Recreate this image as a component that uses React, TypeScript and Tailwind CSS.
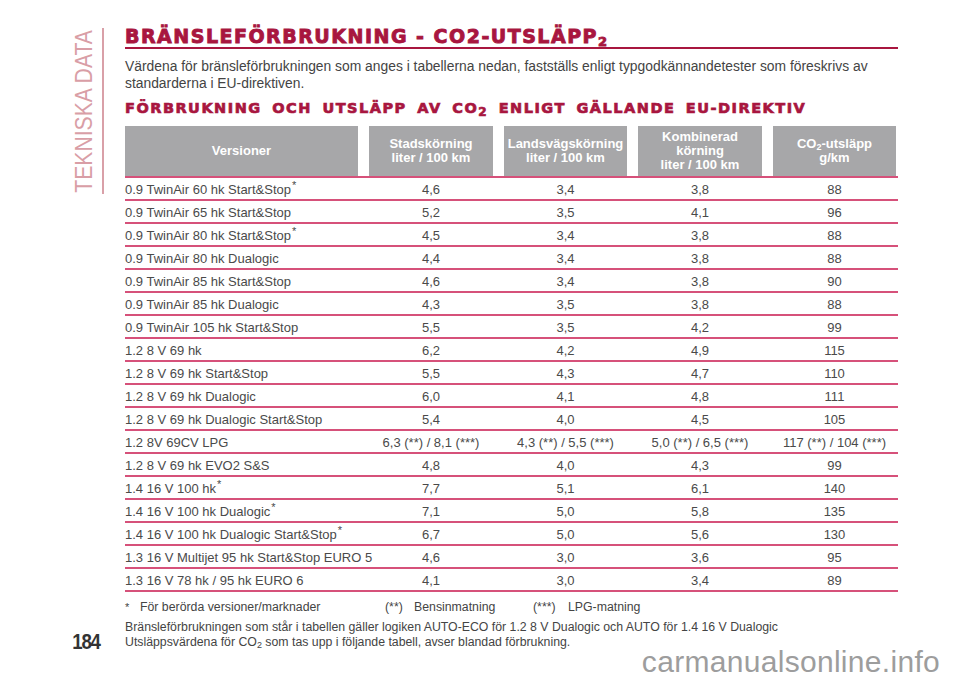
import React from 'react';

type Row = { name: string; star?: boolean; v: [string, string, string, string] };

const ROWS: Row[] = [
  { name: '0.9 TwinAir 60 hk Start&Stop', star: true, v: ['4,6', '3,4', '3,8', '88'] },
  { name: '0.9 TwinAir 65 hk Start&Stop', v: ['5,2', '3,5', '4,1', '96'] },
  { name: '0.9 TwinAir 80 hk Start&Stop', star: true, v: ['4,5', '3,4', '3,8', '88'] },
  { name: '0.9 TwinAir 80 hk Dualogic', v: ['4,4', '3,4', '3,8', '88'] },
  { name: '0.9 TwinAir 85 hk Start&Stop', v: ['4,6', '3,4', '3,8', '90'] },
  { name: '0.9 TwinAir 85 hk Dualogic', v: ['4,3', '3,5', '3,8', '88'] },
  { name: '0.9 TwinAir 105 hk Start&Stop', v: ['5,5', '3,5', '4,2', '99'] },
  { name: '1.2 8 V 69 hk', v: ['6,2', '4,2', '4,9', '115'] },
  { name: '1.2 8 V 69 hk Start&Stop', v: ['5,5', '4,3', '4,7', '110'] },
  { name: '1.2 8 V 69 hk Dualogic', v: ['6,0', '4,1', '4,8', '111'] },
  { name: '1.2 8 V 69 hk Dualogic Start&Stop', v: ['5,4', '4,0', '4,5', '105'] },
  { name: '1.2 8V 69CV LPG', v: ['6,3 (**) / 8,1 (***)', '4,3 (**) / 5,5 (***)', '5,0 (**) / 6,5 (***)', '117 (**) / 104 (***)'] },
  { name: '1.2 8 V 69 hk EVO2 S&S', v: ['4,8', '4,0', '4,3', '99'] },
  { name: '1.4 16 V 100 hk', star: true, v: ['7,7', '5,1', '6,1', '140'] },
  { name: '1.4 16 V 100 hk Dualogic', star: true, v: ['7,1', '5,0', '5,8', '135'] },
  { name: '1.4 16 V 100 hk Dualogic Start&Stop', star: true, v: ['6,7', '5,0', '5,6', '130'] },
  { name: '1.3 16 V Multijet 95 hk Start&Stop EURO 5', v: ['4,6', '3,0', '3,6', '95'] },
  { name: '1.3 16 V 78 hk / 95 hk EURO 6', v: ['4,1', '3,0', '3,4', '89'] },
];

const grid = 'grid grid-cols-[233px_124px_123px_124px_123px] gap-x-[11px]';

export default function App() {
  return (
    <div className="relative w-[960px] h-[678px] bg-white overflow-hidden font-['Liberation_Sans',Arial,sans-serif] text-[#4a4a4a]">
      <div className="flex">
        {/* sidebar */}
        <div className="w-[125px] shrink-0 h-[678px] flex flex-col">
          <div className="flex pt-[28px] pl-[74px]">
            <div className="h-[166px] w-[20px] flex items-center justify-center">
              <span className="[writing-mode:vertical-rl] rotate-180 scale-y-[0.92] text-[23px] leading-none text-[#d99ea6] whitespace-nowrap">
                TEKNISKA DATA
              </span>
            </div>
            <div className="ml-[8px] w-[2px] h-[166px] bg-[#d9a0a8]" />
          </div>
          <div className="mt-auto mb-[25px] pl-[74px] text-[22px] font-bold tracking-[-1.5px] text-[#333] leading-none scale-x-[0.85]">
            184
          </div>
        </div>

        {/* main */}
        <div className="w-[773px] pt-[27px]">
          <h1 className="font-['DejaVu_Sans',sans-serif] font-bold text-[19px] leading-[18px] tracking-[1.5px] text-[#a8163f] [-webkit-text-stroke:0.9px_#a8163f] border-b-2 border-[#a8163f] pb-[2px]">
            BRÄNSLEFÖRBRUKNING - CO2-UTSLÄPP<sub className="text-[13px] bottom-[-3px]">2</sub>
          </h1>
          <p className="mt-[9px] text-[13.85px] leading-[17px] text-[#444]">
            Värdena för bränsleförbrukningen som anges i tabellerna nedan, fastställs enligt typgodkännandetester som föreskrivs av standarderna i EU-direktiven.
          </p>
          <h2 className="mt-[8px] font-['DejaVu_Sans',sans-serif] font-bold text-[14.5px] leading-[16px] tracking-[1.5px] [word-spacing:4px] text-[#a8163f] [-webkit-text-stroke:0.7px_#a8163f]">
            FÖRBRUKNING OCH UTSLÄPP AV CO<sub className="text-[12px] bottom-[-3px]">2</sub> ENLIGT GÄLLANDE EU-DIREKTIV
          </h2>

          <div className="mt-[10px]">
            <div className={`${grid} border-b-2 border-[#d6517a]`}>
              {[
                <>Versioner</>,
                <>Stadskörning<br />liter / 100 km</>,
                <>Landsvägskörning<br />liter / 100 km</>,
                <>Kombinerad<br />körning<br />liter / 100 km</>,
                <>CO<sub className="text-[9px]">2</sub>-utsläpp<br />g/km</>,
              ].map((c, i) => (
                <div
                  key={i}
                  className="h-[50px] bg-[#a7a7a9] flex items-center justify-center text-center text-white font-bold text-[13px] leading-[14px]"
                >
                  <div>{c}</div>
                </div>
              ))}
            </div>
            {ROWS.map((r, i) => (
              <div key={i} className={`${grid} h-[23px] items-center border-b-2 border-[#d6517a] text-[13px] leading-none`}>
                <div className="whitespace-nowrap pt-[1px]">
                  {r.name}
                  {r.star && <span className="relative top-[-5px] text-[11px] ml-[1px]">*</span>}
                </div>
                {r.v.map((x, j) => (
                  <div key={j} className="text-center whitespace-nowrap pt-[1px]">{x}</div>
                ))}
              </div>
            ))}
          </div>

          <div className="mt-[8px] flex text-[12.3px] leading-[15px] text-[#444]">
            <span className="w-[15px] text-[11px]">*</span>
            <span className="w-[245px]">För berörda versioner/marknader</span>
            <span className="w-[29px]">(**)</span>
            <span className="w-[119px]">Bensinmatning</span>
            <span className="w-[35px]">(***)</span>
            <span>LPG-matning</span>
          </div>
          <p className="mt-[5px] text-[12.3px] leading-[15px] text-[#444]">
            Bränsleförbrukningen som står i tabellen gäller logiken AUTO-ECO för 1.2 8 V Dualogic och AUTO för 1.4 16 V Dualogic
            <br />
            Utsläppsvärdena för CO<sub className="text-[9px]">2</sub> som tas upp i följande tabell, avser blandad förbrukning.
          </p>
        </div>
      </div>

      <div className="absolute right-[20px] bottom-[-4px] text-[30px] leading-[40px] text-[#9d9d9d] tracking-[0.3px]">
        carmanualsonline.info
      </div>
    </div>
  );
}
